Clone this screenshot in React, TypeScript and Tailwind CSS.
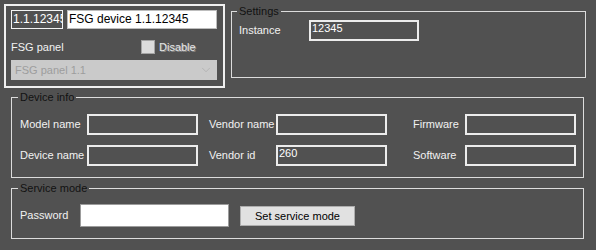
import { ChevronDown } from "lucide-react";

const font = "font-['Liberation_Sans',Arial,sans-serif] text-[11px]";

const DarkBox = ({ w, value }: { w: string; value?: string }) => (
    <div className={`${w} shrink-0 h-[21px] border-2 border-[#ececec] px-[1px] leading-[13px] text-white overflow-hidden whitespace-nowrap`}>
        {value}
    </div>
);

const Label = ({ w, className = "", children }: { w: string; className?: string; children: React.ReactNode }) => (
    <span className={`${w} ${className} shrink-0 whitespace-nowrap`}>{children}</span>
);

const Row = ({ children }: { children: React.ReactNode }) => (
    <div className="flex items-center h-[21px]">{children}</div>
);

const App = () => {
    return (
        <div className={`w-[596px] h-[250px] bg-[#515151] text-[#f2f2f2] ${font} overflow-hidden`}>
            <div className="flex items-start pt-[4px] pl-[4px]">
                {/* device header */}
                <div className="w-[221px] h-[84px] shrink-0 border-2 border-[#f0f0f0] pl-[5px] pt-[4px]">
                    <div className="flex gap-[4px]">
                        <div className="w-[52px] h-[19px] border border-[#f4f4f4] pl-[1px] leading-[17px] text-[12px] text-white overflow-hidden whitespace-nowrap">
                            1.1.12345
                        </div>
                        <div className="w-[150px] h-[19px] border border-[#bdbdbd] bg-white pl-[1px] leading-[17px] text-[12px] text-black whitespace-nowrap">
                            FSG device 1.1.12345
                        </div>
                    </div>
                    <div className="flex items-center h-[14px] mt-[11px]">
                        <Label w="w-[130px]">FSG panel</Label>
                        <span className="w-[14px] h-[14px] border border-[#a4a4a4] bg-[#dcdcdc]" />
                        <span className="ml-[4px] text-[#e6e6e6] [text-shadow:1px_1px_0_#8a8a8a]">Disable</span>
                    </div>
                    <div className="mt-[6px] w-[206px] h-[20px] bg-[#cacaca] flex items-center justify-between pl-[4px] pr-[4px] text-[#9d9d9d]">
                        <span>FSG panel 1.1</span>
                        <ChevronDown size={14} strokeWidth={1.2} className="text-[#ababab]" />
                    </div>
                </div>

                <fieldset className="ml-[6px] w-[355px] h-[74px] border border-[#dcdcdc] pl-[5px]">
                    <legend className="px-[2px] leading-[14px] text-[#111]">Settings</legend>
                    <div className="pl-[2px] mt-[2px]">
                        <Row>
                            <Label w="w-[70px]">Instance</Label>
                            <DarkBox w="w-[110px]" value="12345" />
                        </Row>
                    </div>
                </fieldset>
            </div>

            <fieldset className="ml-[11px] mt-[2px] w-[573px] border border-[#dcdcdc] pl-[6px] pb-[11px]">
                <legend className="px-[2px] leading-[14px] text-[#111]">Device info</legend>
                <div className="pl-[2px] pt-[10px] flex flex-col gap-[10px]">
                    <Row>
                        <Label w="w-[67px]">Model name</Label>
                        <DarkBox w="w-[111px]" />
                        <Label w="w-[67px]" className="ml-[11px]">Vendor name</Label>
                        <DarkBox w="w-[111px]" />
                        <Label w="w-[52px]" className="ml-[26px]">Firmware</Label>
                        <DarkBox w="w-[111px]" />
                    </Row>
                    <Row>
                        <Label w="w-[67px]">Device name</Label>
                        <DarkBox w="w-[111px]" />
                        <Label w="w-[67px]" className="ml-[11px]">Vendor id</Label>
                        <DarkBox w="w-[111px]" value="260" />
                        <Label w="w-[52px]" className="ml-[26px]">Software</Label>
                        <DarkBox w="w-[111px]" />
                    </Row>
                </div>
            </fieldset>

            <fieldset className="ml-[11px] mt-[3px] w-[573px] border border-[#dcdcdc] pl-[6px] pb-[11px]">
                <legend className="px-[2px] leading-[14px] text-[#111]">Service mode</legend>
                <div className="pl-[2px] pt-[9px] flex items-center">
                    <Label w="w-[60px]">Password</Label>
                    <div className="w-[149px] h-[23px] border border-[#9c9c9c] bg-white" />
                    <button className="ml-[11px] w-[115px] h-[20px] border border-[#adadad] bg-[#e1e1e1] text-black leading-[18px]">
                        Set service mode
                    </button>
                </div>
            </fieldset>
        </div>
    );
};

export default App;
